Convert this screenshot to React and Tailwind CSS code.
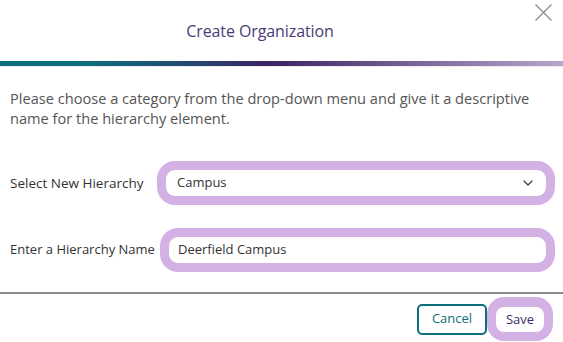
import { ChevronDown } from 'lucide-react';

const font = { fontFamily: '"Open Sans", Lato, sans-serif' };

const App = () => {
    return (
        <div className="w-[563px] h-[342px] bg-white overflow-hidden text-[#333]" style={font}>
            <div className="relative h-[61px] flex items-center justify-center pr-[43px]">
                <h1 className="text-[16px] text-[#4b3a78] tracking-[-0.1px]">Create Organization</h1>
                <button className="absolute left-[535px] top-[4px] text-[#8c8c8c]">
                    <svg width="17" height="17" viewBox="0 0 17 17" fill="none" stroke="currentColor" strokeWidth="1.3">
                        <path d="M0.5 0.5L16.5 16.5M16.5 0.5L0.5 16.5" />
                    </svg>
                </button>
            </div>
            <div className="h-[5px] bg-[linear-gradient(to_right,#0e6f7e_0%,#0e6f7e_14%,#25466f_35%,#3d2265_48%,#6b578c_68%,#b5a6cd_100%)]" />
            <div className="h-px bg-[#ececec]" />

            <div className="px-[10px]">
                <p className="mt-[21px] text-[14.6px] leading-[20px] text-[#555] pr-[15px]">
                    Please choose a category from the drop-down menu and give it a descriptive name for the hierarchy element.
                </p>

                <div className="mt-[33px] flex items-center">
                    <label className="w-[147px] text-[13.5px] text-[#333]">Select New Hierarchy</label>
                    <div className="flex-1 mr-[-2px] p-[9px] bg-[#d3b1e4] rounded-[18px]">
                        <div className="h-[26px] bg-white rounded-[9px] flex items-center justify-between pl-[11px] pr-[10px] text-[13px]">
                            <span>Campus</span>
                            <ChevronDown className="w-[16px] h-[16px] text-[#2d3e50]" strokeWidth={1.8} />
                        </div>
                    </div>
                </div>

                <div className="mt-[23px] flex items-center">
                    <label className="w-[150px] text-[13px] text-[#333] whitespace-nowrap">Enter a Hierarchy Name</label>
                    <div className="flex-1 mr-[-2px] p-[9px] bg-[#d3b1e4] rounded-[18px]">
                        <div className="h-[26px] bg-white rounded-[9px] flex items-center pl-[9px] text-[13px]">
                            <span>Deerfield Campus</span>
                        </div>
                    </div>
                </div>
            </div>

            <div className="mt-[20px] h-[2px] bg-[#8a8a8a]" />

            <div className="flex justify-end items-center pt-[3px] pr-[10px]">
                <button className="w-[70px] h-[31px] border-2 border-[#0f6e7c] rounded-[5px] text-[13px] text-[#0f6e7c]">
                    Cancel
                </button>
                <div className="p-[9px] bg-[#d3b1e4] rounded-[17px]">
                    <button className="w-[48px] h-[25px] bg-white rounded-[8px] text-[13px] text-[#3d2a6b]">
                        Save
                    </button>
                </div>
            </div>
        </div>
    );
};

export default App;
